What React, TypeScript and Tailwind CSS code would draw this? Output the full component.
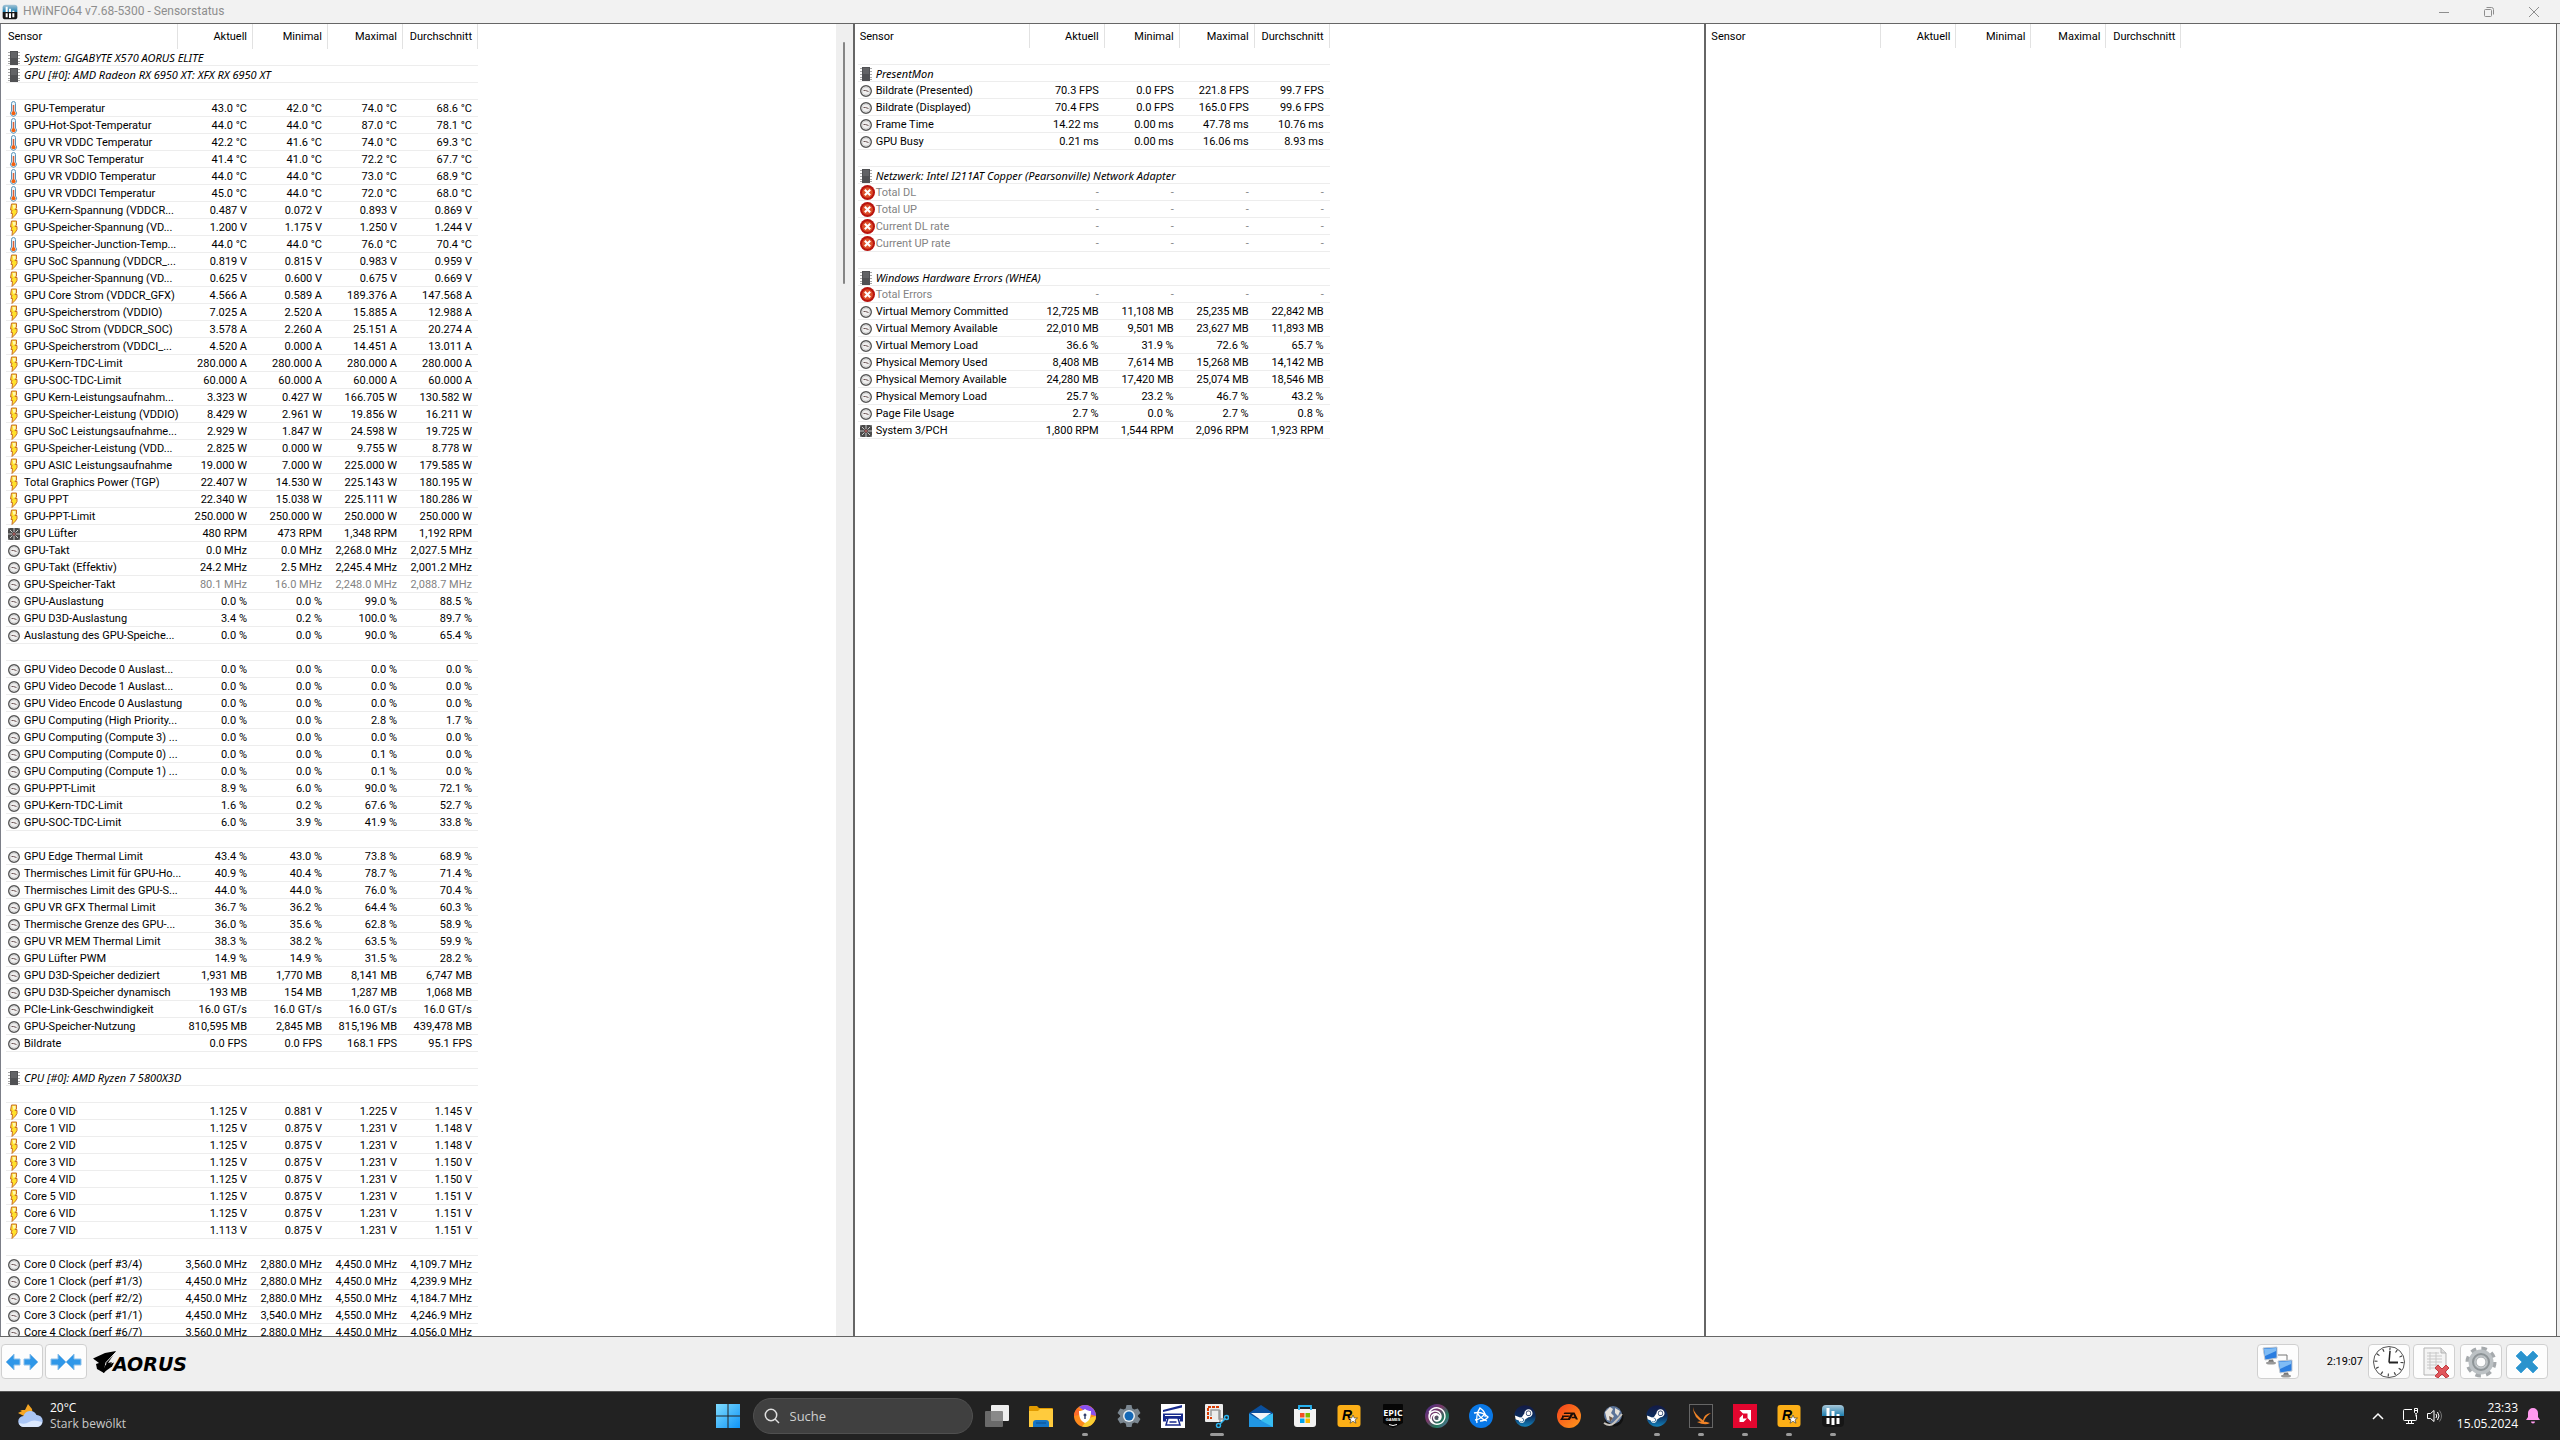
import { FaSteam } from "react-icons/fa"
import { SiEa, SiUbisoft } from "react-icons/si"

type Kind = "chip" | "temp" | "volt" | "fan" | "clock" | "error"

interface IRow {
    kind?: Kind
    name?: string
    values?: string[]
    dim?: boolean
}

const group = (name: string): IRow => ({ kind: "chip", name })
const row = (kind: Kind, name: string, values: string, dim = false): IRow => ({
    kind,
    name,
    values: values.split("|"),
    dim,
})
const gap: IRow = {}

const hardwareRows: IRow[] = [
    group("System: GIGABYTE X570 AORUS ELITE"),
    group("GPU [#0]: AMD Radeon RX 6950 XT: XFX RX 6950 XT"),
    gap,
    row("temp", "GPU-Temperatur", "43.0 °C|42.0 °C|74.0 °C|68.6 °C"),
    row("temp", "GPU-Hot-Spot-Temperatur", "44.0 °C|44.0 °C|87.0 °C|78.1 °C"),
    row("temp", "GPU VR VDDC Temperatur", "42.2 °C|41.6 °C|74.0 °C|69.3 °C"),
    row("temp", "GPU VR SoC Temperatur", "41.4 °C|41.0 °C|72.2 °C|67.7 °C"),
    row("temp", "GPU VR VDDIO Temperatur", "44.0 °C|44.0 °C|73.0 °C|68.9 °C"),
    row("temp", "GPU VR VDDCI Temperatur", "45.0 °C|44.0 °C|72.0 °C|68.0 °C"),
    row("volt", "GPU-Kern-Spannung (VDDCR...", "0.487 V|0.072 V|0.893 V|0.869 V"),
    row("volt", "GPU-Speicher-Spannung (VD...", "1.200 V|1.175 V|1.250 V|1.244 V"),
    row("temp", "GPU-Speicher-Junction-Temp...", "44.0 °C|44.0 °C|76.0 °C|70.4 °C"),
    row("volt", "GPU SoC Spannung (VDDCR_...", "0.819 V|0.815 V|0.983 V|0.959 V"),
    row("volt", "GPU-Speicher-Spannung (VD...", "0.625 V|0.600 V|0.675 V|0.669 V"),
    row("volt", "GPU Core Strom (VDDCR_GFX)", "4.566 A|0.589 A|189.376 A|147.568 A"),
    row("volt", "GPU-Speicherstrom (VDDIO)", "7.025 A|2.520 A|15.885 A|12.988 A"),
    row("volt", "GPU SoC Strom (VDDCR_SOC)", "3.578 A|2.260 A|25.151 A|20.274 A"),
    row("volt", "GPU-Speicherstrom (VDDCI_...", "4.520 A|0.000 A|14.451 A|13.011 A"),
    row("volt", "GPU-Kern-TDC-Limit", "280.000 A|280.000 A|280.000 A|280.000 A"),
    row("volt", "GPU-SOC-TDC-Limit", "60.000 A|60.000 A|60.000 A|60.000 A"),
    row("volt", "GPU Kern-Leistungsaufnahm...", "3.323 W|0.427 W|166.705 W|130.582 W"),
    row("volt", "GPU-Speicher-Leistung (VDDIO)", "8.429 W|2.961 W|19.856 W|16.211 W"),
    row("volt", "GPU SoC Leistungsaufnahme...", "2.929 W|1.847 W|24.598 W|19.725 W"),
    row("volt", "GPU-Speicher-Leistung (VDD...", "2.825 W|0.000 W|9.755 W|8.778 W"),
    row("volt", "GPU ASIC Leistungsaufnahme", "19.000 W|7.000 W|225.000 W|179.585 W"),
    row("volt", "Total Graphics Power (TGP)", "22.407 W|14.530 W|225.143 W|180.195 W"),
    row("volt", "GPU PPT", "22.340 W|15.038 W|225.111 W|180.286 W"),
    row("volt", "GPU-PPT-Limit", "250.000 W|250.000 W|250.000 W|250.000 W"),
    row("fan", "GPU Lüfter", "480 RPM|473 RPM|1,348 RPM|1,192 RPM"),
    row("clock", "GPU-Takt", "0.0 MHz|0.0 MHz|2,268.0 MHz|2,027.5 MHz"),
    row("clock", "GPU-Takt (Effektiv)", "24.2 MHz|2.5 MHz|2,245.4 MHz|2,001.2 MHz"),
    row("clock", "GPU-Speicher-Takt", "80.1 MHz|16.0 MHz|2,248.0 MHz|2,088.7 MHz", true),
    row("clock", "GPU-Auslastung", "0.0 %|0.0 %|99.0 %|88.5 %"),
    row("clock", "GPU D3D-Auslastung", "3.4 %|0.2 %|100.0 %|89.7 %"),
    row("clock", "Auslastung des GPU-Speiche...", "0.0 %|0.0 %|90.0 %|65.4 %"),
    gap,
    row("clock", "GPU Video Decode 0 Auslast...", "0.0 %|0.0 %|0.0 %|0.0 %"),
    row("clock", "GPU Video Decode 1 Auslast...", "0.0 %|0.0 %|0.0 %|0.0 %"),
    row("clock", "GPU Video Encode 0 Auslastung", "0.0 %|0.0 %|0.0 %|0.0 %"),
    row("clock", "GPU Computing (High Priority...", "0.0 %|0.0 %|2.8 %|1.7 %"),
    row("clock", "GPU Computing (Compute 3) ...", "0.0 %|0.0 %|0.0 %|0.0 %"),
    row("clock", "GPU Computing (Compute 0) ...", "0.0 %|0.0 %|0.1 %|0.0 %"),
    row("clock", "GPU Computing (Compute 1) ...", "0.0 %|0.0 %|0.1 %|0.0 %"),
    row("clock", "GPU-PPT-Limit", "8.9 %|6.0 %|90.0 %|72.1 %"),
    row("clock", "GPU-Kern-TDC-Limit", "1.6 %|0.2 %|67.6 %|52.7 %"),
    row("clock", "GPU-SOC-TDC-Limit", "6.0 %|3.9 %|41.9 %|33.8 %"),
    gap,
    row("clock", "GPU Edge Thermal Limit", "43.4 %|43.0 %|73.8 %|68.9 %"),
    row("clock", "Thermisches Limit für GPU-Ho...", "40.9 %|40.4 %|78.7 %|71.4 %"),
    row("clock", "Thermisches Limit des GPU-S...", "44.0 %|44.0 %|76.0 %|70.4 %"),
    row("clock", "GPU VR GFX Thermal Limit", "36.7 %|36.2 %|64.4 %|60.3 %"),
    row("clock", "Thermische Grenze des GPU-...", "36.0 %|35.6 %|62.8 %|58.9 %"),
    row("clock", "GPU VR MEM Thermal Limit", "38.3 %|38.2 %|63.5 %|59.9 %"),
    row("clock", "GPU Lüfter PWM", "14.9 %|14.9 %|31.5 %|28.2 %"),
    row("clock", "GPU D3D-Speicher dediziert", "1,931 MB|1,770 MB|8,141 MB|6,747 MB"),
    row("clock", "GPU D3D-Speicher dynamisch", "193 MB|154 MB|1,287 MB|1,068 MB"),
    row("clock", "PCIe-Link-Geschwindigkeit", "16.0 GT/s|16.0 GT/s|16.0 GT/s|16.0 GT/s"),
    row("clock", "GPU-Speicher-Nutzung", "810,595 MB|2,845 MB|815,196 MB|439,478 MB"),
    row("clock", "Bildrate", "0.0 FPS|0.0 FPS|168.1 FPS|95.1 FPS"),
    gap,
    group("CPU [#0]: AMD Ryzen 7 5800X3D"),
    gap,
    row("volt", "Core 0 VID", "1.125 V|0.881 V|1.225 V|1.145 V"),
    row("volt", "Core 1 VID", "1.125 V|0.875 V|1.231 V|1.148 V"),
    row("volt", "Core 2 VID", "1.125 V|0.875 V|1.231 V|1.148 V"),
    row("volt", "Core 3 VID", "1.125 V|0.875 V|1.231 V|1.150 V"),
    row("volt", "Core 4 VID", "1.125 V|0.875 V|1.231 V|1.150 V"),
    row("volt", "Core 5 VID", "1.125 V|0.875 V|1.231 V|1.151 V"),
    row("volt", "Core 6 VID", "1.125 V|0.875 V|1.231 V|1.151 V"),
    row("volt", "Core 7 VID", "1.113 V|0.875 V|1.231 V|1.151 V"),
    gap,
    row("clock", "Core 0 Clock (perf #3/4)", "3,560.0 MHz|2,880.0 MHz|4,450.0 MHz|4,109.7 MHz"),
    row("clock", "Core 1 Clock (perf #1/3)", "4,450.0 MHz|2,880.0 MHz|4,450.0 MHz|4,239.9 MHz"),
    row("clock", "Core 2 Clock (perf #2/2)", "4,450.0 MHz|2,880.0 MHz|4,550.0 MHz|4,184.7 MHz"),
    row("clock", "Core 3 Clock (perf #1/1)", "4,450.0 MHz|3,540.0 MHz|4,550.0 MHz|4,246.9 MHz"),
    row("clock", "Core 4 Clock (perf #6/7)", "3,560.0 MHz|2,880.0 MHz|4,450.0 MHz|4,056.0 MHz"),
]

const systemRows: IRow[] = [
    gap,
    group("PresentMon"),
    row("clock", "Bildrate (Presented)", "70.3 FPS|0.0 FPS|221.8 FPS|99.7 FPS"),
    row("clock", "Bildrate (Displayed)", "70.4 FPS|0.0 FPS|165.0 FPS|99.6 FPS"),
    row("clock", "Frame Time", "14.22 ms|0.00 ms|47.78 ms|10.76 ms"),
    row("clock", "GPU Busy", "0.21 ms|0.00 ms|16.06 ms|8.93 ms"),
    gap,
    group("Netzwerk: Intel I211AT Copper (Pearsonville) Network Adapter"),
    row("error", "Total DL", "-|-|-|-", true),
    row("error", "Total UP", "-|-|-|-", true),
    row("error", "Current DL rate", "-|-|-|-", true),
    row("error", "Current UP rate", "-|-|-|-", true),
    gap,
    group("Windows Hardware Errors (WHEA)"),
    row("error", "Total Errors", "-|-|-|-", true),
    row("clock", "Virtual Memory Committed", "12,725 MB|11,108 MB|25,235 MB|22,842 MB"),
    row("clock", "Virtual Memory Available", "22,010 MB|9,501 MB|23,627 MB|11,893 MB"),
    row("clock", "Virtual Memory Load", "36.6 %|31.9 %|72.6 %|65.7 %"),
    row("clock", "Physical Memory Used", "8,408 MB|7,614 MB|15,268 MB|14,142 MB"),
    row("clock", "Physical Memory Available", "24,280 MB|17,420 MB|25,074 MB|18,546 MB"),
    row("clock", "Physical Memory Load", "25.7 %|23.2 %|46.7 %|43.2 %"),
    row("clock", "Page File Usage", "2.7 %|0.0 %|2.7 %|0.8 %"),
    row("fan", "System 3/PCH", "1,800 RPM|1,544 RPM|2,096 RPM|1,923 RPM"),
]

const columns = ["Aktuell", "Minimal", "Maximal", "Durchschnitt"]

const SensorIcon = ({ kind }: { kind: Kind }) => {
    if (kind === "chip") {
        return (
            <svg width="12" height="14" viewBox="0 0 12 14" className="shrink-0">
                <path d="M0 1.5h12M0 4.5h12M0 7.5h12M0 10.5h12M0 12.5h12" stroke="#a9a9a9" />
                <rect x="2" width="8" height="14" fill="#505154" />
                <rect x="3" y="1" width="6" height="6" fill="#626366" />
            </svg>
        )
    }
    if (kind === "temp") {
        return (
            <svg width="12" height="16" viewBox="0 0 12 16" className="shrink-0">
                <path d="M3.500 2.500a2 2 0 0 1 4 0v7.500a3 3 0 1 1-4 0z" fill="#eaf5fc" stroke="#5b93b8" />
                <path d="M5.500 4v8" stroke="#d9623a" strokeWidth="1.500" />
                <circle cx="5.500" cy="12.300" r="2" fill="#f2600f" />
            </svg>
        )
    }
    if (kind === "volt") {
        return (
            <svg width="12" height="16" viewBox="0 0 12 16" className="shrink-0">
                <path d="M3.500 1h5v4L7 6.500h2v3L7.500 12 4 15.500l.5-5H3l1-3.500H2.500z" fill="#ffe12b" stroke="#c8702c" />
                <path d="M4.500 2h3v3L5.500 6z" fill="#fff6b5" />
            </svg>
        )
    }
    if (kind === "fan") {
        return (
            <svg width="12" height="12" viewBox="0 0 12 12" className="shrink-0">
                <rect width="12" height="12" fill="#4b4b4b" />
                <path d="M6 0v4M6 8v4M0 6h4M8 6h4M2 2l2.500 2.500M10 2 7.500 4.500M2 10l2.500-2.500M10 10 7.500 7.500" stroke="#c9c9c9" />
                <circle cx="6" cy="6" r="1.500" fill="#a05a5a" />
                <path d="M0 0h2L0 2zM12 0v2l-2-2zM0 12v-2l2 2zM12 12h-2l2-2z" fill="#8d8d8d" />
            </svg>
        )
    }
    if (kind === "error") {
        return (
            <svg width="15" height="15" viewBox="0 0 14 14" className="shrink-0">
                <circle cx="7" cy="7" r="7" fill="#b8140e" />
                <circle cx="7" cy="7" r="5" fill="#dd4f2a" />
                <path d="m4.500 4.500 5 5m0-5-5 5" stroke="#fff" strokeWidth="2" />
            </svg>
        )
    }
    return (
        <svg width="12" height="14" viewBox="0 0 12 14" className="shrink-0">
            <circle cx="6" cy="7" r="5.300" fill="#efefef" stroke="#555" strokeWidth="1.400" />
            <circle cx="6" cy="7" r="4" fill="none" stroke="#d2d2d2" />
            <path d="M3.500 6.500h2l3 1" stroke="#6d5555" fill="none" />
        </svg>
    )
}

const SensorRow = ({ item }: { item: IRow }) => {
    const line = "h-[17px] border-b border-[#ededed] p-0 pt-px"
    if (!item.kind) {
        return (
            <tr>
                <td colSpan={5} className={line}></td>
            </tr>
        )
    }
    const grayName = item.kind === "error" ? "text-[#838383]" : ""
    const grayValue = item.dim ? "text-[#838383]" : ""
    const name = (
        <div className="flex h-[15px] items-center pl-0.5">
            <span className="flex w-4 shrink-0 items-center">
                <SensorIcon kind={item.kind} />
            </span>
            <span className={grayName}>{item.name}</span>
        </div>
    )
    if (!item.values) {
        return (
            <tr>
                <th colSpan={5} scope="colgroup" className={line + " text-left font-['Noto_Sans',sans-serif] font-normal italic"}>
                    {name}
                </th>
            </tr>
        )
    }
    return (
        <tr>
            <th scope="row" className={line + " text-left font-normal"}>
                {name}
            </th>
            {item.values.map((value, index) => (
                <td key={index} className={line + " pr-1.5 text-right " + grayValue}>
                    {value}
                </td>
            ))}
        </tr>
    )
}

const SensorTable = ({ rows, tall }: { rows: IRow[]; tall?: boolean }) => (
    <table className="w-[472px] shrink-0 table-fixed border-separate border-spacing-0 self-start whitespace-nowrap">
        <colgroup>
            <col className="w-[172px]" />
            <col />
            <col />
            <col />
            <col />
        </colgroup>
        <thead>
            <tr className={tall ? "h-[25px]" : "h-6"}>
                <th scope="col" className="border-r border-[#e2e2e2] p-0 pl-0.5 text-left font-normal">
                    Sensor
                </th>
                {columns.map((column) => (
                    <th key={column} scope="col" className="border-r border-[#e2e2e2] p-0 pr-[5px] text-right font-normal">
                        {column}
                    </th>
                ))}
            </tr>
        </thead>
        <tbody>
            {rows.map((item, index) => (
                <SensorRow key={index} item={item} />
            ))}
        </tbody>
    </table>
)

const HwinfoIcon = ({ size }: { size: number }) => (
    <svg width={size} height={size} viewBox="0 0 24 24">
        <defs>
            <linearGradient id="hw" x2="0" y2="1">
                <stop offset="0" stopColor="#a8c7d8" />
                <stop offset=".5" stopColor="#1d7fb0" />
                <stop offset=".5" stopColor="#161616" />
            </linearGradient>
        </defs>
        <rect x="1" y="1" width="22" height="22" rx="4" fill="url(#hw)" />
        <path d="M7 4v8M12 7v5M17 10v2M7 14v6M12 14v7M17 14v6" stroke="#fff" strokeWidth="3" />
    </svg>
)

const TitleBar = () => (
    <header className="flex h-[23px] shrink-0 items-center bg-[#f2f2f2] pr-5 pl-0.5 text-[#8e8e8e]">
        <HwinfoIcon size={16} />
        <h1 className="ml-[5px] flex-1 text-[12px]">HWiNFO64 v7.68-5300 - Sensorstatus</h1>
        <div className="flex gap-[33px]">
            <button aria-label="Minimieren">
                <svg width="12" height="12" viewBox="0 0 12 12" fill="none" stroke="currentColor">
                    <path d="M1 6.500h10" />
                </svg>
            </button>
            <button aria-label="Wiederherstellen">
                <svg width="12" height="12" viewBox="0 0 12 12" fill="none" stroke="currentColor">
                    <rect x="1.500" y="3.500" width="7" height="7" rx="1" />
                    <path d="M3.500 1.500h5a2 2 0 0 1 2 2v5" />
                </svg>
            </button>
            <button aria-label="Schließen">
                <svg width="12" height="12" viewBox="0 0 12 12" fill="none" stroke="currentColor">
                    <path d="m1 1 10 10M11 1 1 11" />
                </svg>
            </button>
        </div>
    </header>
)

const ToolButton = ({ label, children }: { label: string; children: React.ReactNode }) => (
    <button
        aria-label={label}
        className="flex h-[35px] w-[42px] items-center justify-center rounded border border-[#d0d0d0] bg-[#fdfdfd]"
    >
        {children}
    </button>
)

const AorusLogo = () => (
    <svg width="98" height="24" viewBox="0 0 98 24" role="img" aria-label="AORUS">
        <path d="M0 8.500 12 3l11-2-8 12 4-1-8 11-7-4-1-5 3-1z" />
        <path d="m22 3-9 9.500-1 5" stroke="#efefef" fill="none" />
        <path d="M12 15.500l9-3-2 4-9 6.500z" />
        <text x="20" y="21" fontSize="19" fontWeight="700" fontStyle="italic" fontFamily="DejaVu Sans, sans-serif">
            AORUS
        </text>
    </svg>
)

const Monitor = ({ x, y }: { x: number; y: number }) => (
    <g transform={`translate(${x} ${y})`}>
        <path d="M0 1 14 0v11L2 13z" fill="#2a7de0" stroke="#c3cad2" />
        <path d="M1 2 13 1v3L2 9z" fill="#7fbcf5" />
        <path d="m6 13 4-.5 1 3H5z" fill="#777" />
        <ellipse cx="8" cy="16" rx="5" ry="1.500" fill="#999" />
    </g>
)

const ToolBar = () => (
    <div className="flex h-[54px] shrink-0 items-start bg-[#efefef] pt-[7px] pr-3 pl-px">
        <div className="flex gap-0.5">
            <ToolButton label="Spalten verbreitern">
                <svg width="34" height="20" viewBox="0 0 34 20" fill="#2f97e8" stroke="#8cc0ea">
                    <path d="M1 10 9 2v5h6v6H9v5zM33 10l-8-8v5h-6v6h6v5z" />
                </svg>
            </ToolButton>
            <ToolButton label="Spalten verkleinern">
                <svg width="34" height="20" viewBox="0 0 34 20" fill="#2f97e8" stroke="#8cc0ea">
                    <path d="M17 10 9 2v5H2v6h7v5zM17 10l8-8v5h7v6h-7v5z" />
                </svg>
            </ToolButton>
        </div>
        <div className="ml-1.5 flex h-[35px] flex-1 items-center">
            <AorusLogo />
        </div>
        <div className="flex items-center">
            <ToolButton label="Netzwerk">
                <svg width="32" height="32" viewBox="0 0 32 32">
                    <path d="M16 9h9v7" fill="none" stroke="#777" />
                    <Monitor x={1} y={1} />
                    <Monitor x={16} y={14} />
                </svg>
            </ToolButton>
            <time className="w-[69px] pr-[5px] text-right">2:19:07</time>
            <ToolButton label="Uhr">
                <svg width="34" height="34" viewBox="0 0 34 34" fill="none" stroke="#222">
                    <circle cx="17" cy="17" r="15.500" stroke="#555" fill="#fff" />
                    <circle cx="17" cy="17" r="13" strokeWidth="3" strokeDasharray="1.200 5.607" stroke="#444" />
                    <path d="M17 17.500 18 6" strokeWidth="1.500" />
                    <path d="M17 17.500h9" strokeWidth="2" />
                </svg>
            </ToolButton>
            <div className="w-[3px]" />
            <ToolButton label="Protokoll">
                <svg width="34" height="32" viewBox="0 0 34 32">
                    <path d="M7 2h17l5 5v22H7z" fill="#f4f4f4" stroke="#b3b3b3" />
                    <path d="M24 2v5h5" fill="#ddd" stroke="#b3b3b3" />
                    <path d="M10 7h12M10 10h15M10 13h15M10 16h15M10 19h12M10 22h10M13 6v18M19 6v18" stroke="#c8c8c8" />
                    <path d="m21 19 4 4 4-4 3 3-4 4 4 4-3 2-4-4-4 4-3-2 4-4-4-4z" fill="#e0575c" stroke="#c23a40" />
                </svg>
            </ToolButton>
            <div className="w-[5px]" />
            <ToolButton label="Einstellungen">
                <svg width="32" height="32" viewBox="0 0 32 32">
                    <circle cx="16" cy="16" r="13" fill="none" stroke="#a5a9ac" strokeWidth="5" strokeDasharray="5.200 5.010" />
                    <circle cx="16" cy="16" r="9" fill="none" stroke="#bcc1c4" strokeWidth="7" />
                    <circle cx="16" cy="16" r="8" fill="none" stroke="#8e9497" strokeWidth="2" />
                    <circle cx="16" cy="16" r="5" fill="#fdfdfd" stroke="#9aa0a3" />
                </svg>
            </ToolButton>
            <div className="w-1" />
            <ToolButton label="Beenden">
                <svg width="24" height="24" viewBox="0 0 24 24">
                    <path d="m6 1 6 6 6-6 5 5-6 6 6 6-5 5-6-6-6 6-5-5 6-6-6-6z" fill="#2b93cd" stroke="#4aa9dd" />
                </svg>
            </ToolButton>
        </div>
    </div>
)

const Steam = () => (
    <svg width="24" height="24" viewBox="0 0 24 24">
        <defs>
            <linearGradient id="steam" x2="0" y2="1">
                <stop offset="0" stopColor="#141a45" />
                <stop offset=".5" stopColor="#0c2c5c" />
                <stop offset="1" stopColor="#1383bd" />
            </linearGradient>
        </defs>
        <circle cx="12" cy="12" r="10" fill="#fff" />
        <FaSteam x="1" y="1" size={22} fill="url(#steam)" />
    </svg>
)

const Rockstar = () => (
    <svg width="24" height="24" viewBox="0 0 24 24">
        <rect x=".5" y="1" width="23" height="22" rx="3" fill="#fcaf17" />
        <text x="5" y="16" fontSize="14" fontWeight="700" fontStyle="italic" fontFamily="Liberation Sans, sans-serif">
            R
        </text>
        <path d="m16 11 1.300 3H20.500l-2.500 2 1 3.200-3-1.900-3 1.900 1-3.200-2.500-2h3.200z" fill="#fff" stroke="#333" strokeWidth=".6" />
    </svg>
)

// pinned and running programs, in taskbar order
const apps: { name: string; icon: React.ReactNode; state?: "open" | "active" }[] = [
    {
        name: "Aktive Anwendungen",
        icon: (
            <svg width="24" height="24" viewBox="0 0 24 24">
                <rect x="6" y="1" width="18" height="16" rx="1" fill="#eee" />
                <rect y="7" width="18" height="16" rx="1" fill="#777" fillOpacity=".85" />
            </svg>
        ),
    },
    {
        name: "Explorer",
        icon: (
            <svg width="24" height="24" viewBox="0 0 24 24">
                <path d="M0 3a1 1 0 0 1 1-1h7l2 2h13a1 1 0 0 1 1 1v4H0z" fill="#e19a00" />
                <path d="M0 7h9l2-2h12a1 1 0 0 1 1 1v17H0z" fill="#ffcb3d" />
                <path d="M4 23v-4a3 3 0 0 1 3-3h10a3 3 0 0 1 3 3v4z" fill="#1574c4" />
                <path d="M7 19h10" stroke="#0d4f8e" />
            </svg>
        ),
    },
    {
        name: "Browser",
        state: "open",
        icon: (
            <svg width="24" height="24" viewBox="0 0 24 24">
                <circle cx="12" cy="12" r="11" fill="#ff8a1c" />
                <path d="M6 3a11 11 0 0 1 17 9l-7-2z" fill="#8950f0" />
                <path d="M23 12a11 11 0 0 1-14 10.500L16 14z" fill="#f9cf33" />
                <path d="M1 12A11 11 0 0 1 5 4l4 6z" fill="#ff6a2c" />
                <path d="M12 5c2 1.500 4 2 6 2 0 5-1 10-6 12-5-2-6-7-6-12 2 0 4-.5 6-2z" fill="#fff" />
                <path d="M12 9.500a1.500 1.500 0 0 1 .7 2.800V15h-1.400v-2.700a1.500 1.500 0 0 1 .7-2.800z" fill="#34406e" />
            </svg>
        ),
    },
    {
        name: "Einstellungen",
        icon: (
            <svg width="24" height="24" viewBox="0 0 24 24">
                <path
                    d="M9.500 1h5l.8 3.400 2 1.200 3.500-1.100L23.500 9l-2.600 2.400v1.200l2.600 2.400-2.700 4.500-3.500-1.100-2 1.200-.8 3.400h-5l-.8-3.400-2-1.200-3.500 1.100L.5 15l2.600-2.400v-1.200L.5 9l2.700-4.500 3.500 1.100 2-1.200z"
                    fill="#7b8791"
                />
                <circle cx="12" cy="12" r="6" fill="#e6edf2" />
                <circle cx="12" cy="12" r="4.500" fill="#1467b5" />
            </svg>
        ),
    },
    {
        name: "Scanner",
        icon: (
            <svg width="24" height="24" viewBox="0 0 24 24">
                <rect width="24" height="24" fill="#fff" />
                <path d="m2 6 19-5v2.500L2 8zM2 9.500h20v8h-3V15H5v2.500H2z" fill="#172a8c" />
                <path d="M4 11.500h16" stroke="#fff" />
                <path d="M7 14h10l2 7H5z" fill="#fff" stroke="#172a8c" strokeWidth="1.500" />
                <path d="M8.500 18h7" stroke="#172a8c" strokeWidth="1.500" />
            </svg>
        ),
    },
    {
        name: "Snipping Tool",
        state: "active",
        icon: (
            <svg width="24" height="24" viewBox="0 0 24 24">
                <rect width="18" height="18" rx="1" fill="#ececec" />
                <path d="M14 3H3v11h4" fill="none" stroke="#d83b01" strokeWidth="2" strokeDasharray="3 1" />
                <path d="M6 12V6h8v9h7M15 6v12" fill="none" stroke="#999" strokeWidth="1.500" />
                <circle cx="21.500" cy="13.500" r="2" fill="none" stroke="#2bb3ee" strokeWidth="1.500" />
                <circle cx="13.500" cy="21.500" r="2" fill="none" stroke="#2bb3ee" strokeWidth="1.500" />
                <path d="m20 15-5 5" stroke="#2bb3ee" strokeWidth="1.500" />
            </svg>
        ),
    },
    {
        name: "Mail",
        icon: (
            <svg width="24" height="24" viewBox="0 0 24 24">
                <path d="M0 9 12 1l12 8v14H0z" fill="#0a4f9c" />
                <path d="M0 9.500 12 17l12-7.500V23H0z" fill="#2196e3" />
                <path d="M24 9.500V23L9 15z" fill="#38bdf2" />
                <path d="M2 9h20l-10 7z" fill="#f3f6f9" />
            </svg>
        ),
    },
    {
        name: "Microsoft Store",
        icon: (
            <svg width="24" height="24" viewBox="0 0 24 24">
                <path d="M6 7V2h12v5" fill="none" stroke="#28b1ee" strokeWidth="1.800" />
                <path d="M1 5h22v15a3 3 0 0 1-3 3H4a3 3 0 0 1-3-3z" fill="#f2f2f2" />
                <path d="M6 3v3M18 3v3" stroke="#28b1ee" strokeWidth="1.800" />
                <path d="M7 9h4.500v4.500H7z" fill="#f25022" />
                <path d="M12.500 9H17v4.500h-4.500z" fill="#7fba00" />
                <path d="M7 14.500h4.500V19H7z" fill="#00a4ef" />
                <path d="M12.500 14.500H17V19h-4.500z" fill="#ffb900" />
            </svg>
        ),
    },
    { name: "Rockstar Games", icon: <Rockstar /> },
    {
        name: "Epic Games",
        icon: (
            <svg width="24" height="24" viewBox="0 0 24 24">
                <path d="M2 1a1 1 0 0 1 1-1h18a1 1 0 0 1 1 1v18l-10 5-10-5z" fill="#060606" />
                <text x="12" y="12" fontSize="9" fontWeight="700" textAnchor="middle" fill="#fff" fontFamily="Open Sans, sans-serif">
                    EPIC
                </text>
                <text x="12" y="17" fontSize="4" fontWeight="700" textAnchor="middle" fill="#fff" fontFamily="Liberation Sans, sans-serif">
                    GAMES
                </text>
                <path d="M8 20.500q4 2 8 0" stroke="#fff" fill="none" />
            </svg>
        ),
    },
    {
        name: "Ubisoft Connect",
        icon: (
            <svg width="24" height="24" viewBox="0 0 24 24">
                <defs>
                    <linearGradient id="ubi" x2="1" y2="1">
                        <stop offset="0" stopColor="#3c2a86" />
                        <stop offset=".4" stopColor="#7a3a6a" />
                        <stop offset=".7" stopColor="#1f7a5c" />
                        <stop offset="1" stopColor="#7a6ab8" />
                    </linearGradient>
                </defs>
                <circle cx="12" cy="12" r="12" fill="url(#ubi)" />
                <SiUbisoft x="3" y="3" size={18} color="#fff" />
            </svg>
        ),
    },
    {
        name: "Battle.net",
        icon: (
            <svg width="24" height="24" viewBox="0 0 24 24">
                <circle cx="12" cy="12" r="12" fill="#0a78e6" />
                <g fill="none" stroke="#fff" strokeWidth="1.300">
                    <path d="M8 19C7 15 8 8 11 4q6 4 5 9" />
                    <path d="M5 9q8-2 14 4-3 4-8 4" />
                    <path d="M8 8q3 7 10 9M16 9q-3 6-10 7" />
                </g>
            </svg>
        ),
    },
    { name: "Steam", icon: <Steam /> },
    {
        name: "EA",
        icon: (
            <svg width="24" height="24" viewBox="0 0 24 24">
                <defs>
                    <linearGradient id="ea" x2="1" y2="1">
                        <stop offset="0" stopColor="#f4401c" />
                        <stop offset="1" stopColor="#ff9a1c" />
                    </linearGradient>
                </defs>
                <circle cx="12" cy="12" r="12" fill="url(#ea)" />
                <path
                    d="M7.500 8.500h7L13.500 10h-7zM5 11.500h7.500l-1 1.500H7l-1 1.500h5L14.500 8.500h3l3.500 7h-2.200l-.6-1.200h-4l1-1.600h2.200l-1.200-2.400-3.400 5.700H3l2-3z"
                    fill="#1a0d08"
                />
            </svg>
        ),
    },
    {
        name: "Globus",
        icon: (
            <svg width="24" height="24" viewBox="0 0 24 24">
                <circle cx="13" cy="13" r="9.500" fill="#111" />
                <circle cx="12" cy="11" r="9" fill="#5b7398" />
                <path d="M4 8 9 3l3 2-2 4 3 3-3 5-4-1zM14 4l5 3-2 5-3-3z" fill="#e4e0da" />
                <path d="M8 12l4 2-3 4z" fill="#6b5648" />
                <path d="M3 19q6 4 10 0t8-9" stroke="#c9c4bd" strokeWidth="2" fill="none" />
            </svg>
        ),
    },
    { name: "Steam Fenster", icon: <Steam />, state: "open" },
    {
        name: "Spiel",
        state: "open",
        icon: (
            <svg width="24" height="24" viewBox="0 0 24 24">
                <rect x=".5" y=".5" width="23" height="23" fill="#1f1f21" stroke="#666" />
                <path d="M4 3q1 7 11 14v2Q4 14 4 3zM22 9q-7 1-8 7l1 1q2-5 7-8zM8 18q6-2 13 1-5 3-13-1z" fill="#f08327" />
            </svg>
        ),
    },
    {
        name: "AMD Software",
        state: "open",
        icon: (
            <svg width="24" height="24" viewBox="0 0 24 24">
                <rect width="24" height="24" fill="#e3062f" />
                <path d="M6.500 6H18v11.500l-3.500-3.500V9.500H10z" fill="#fff" />
                <path d="M10 10.500v4h4L10.500 18H6.500v-4z" fill="#fff" />
            </svg>
        ),
    },
    { name: "Rockstar Games Fenster", icon: <Rockstar />, state: "open" },
    { name: "HWiNFO64", icon: <HwinfoIcon size={24} />, state: "open" },
]

const Marker = ({ state }: { state?: "open" | "active" }) => {
    if (!state) return null
    return (
        <span
            className={
                "absolute bottom-0 left-1/2 h-[3px] -translate-x-1/2 rounded-full bg-[#9b9b9b] " +
                (state === "active" ? "w-3.5" : "w-1.5")
            }
        />
    )
}

const TaskBar = () => (
    <footer className="grid h-[49px] shrink-0 grid-cols-[1fr_auto_1fr] items-center border-t border-[#555] bg-[#222] font-['Open_Sans',sans-serif] text-[12px] leading-4 text-white">
        <button className="flex items-center gap-1.5 pl-[18px] text-left">
            <svg width="26" height="26" viewBox="0 0 26 26">
                <path d="m10 1 4 5 1 7H6L0 10l4-2-2-1h5z" fill="#f6a623" />
                <path d="M6 24a5.500 5.500 0 0 1-.5-11 7 7 0 0 1 13-1A6 6 0 1 1 19 24z" fill="#a9c5f5" />
                <path d="M6 24a5 5 0 0 1-5-4q6 2 10-1t13 0a5 5 0 0 1-5 5z" fill="#dbe8fd" />
            </svg>
            <span>
                <span className="block">20°C</span>
                <span className="block text-[#c9c9c9]">Stark bewölkt</span>
            </span>
        </button>
        <div className="flex items-center">
            <button aria-label="Start" className="flex w-11 justify-center">
                <svg width="24" height="24" viewBox="0 0 24 24">
                    <defs>
                        <linearGradient id="win" x2="1" y2="1">
                            <stop offset="0" stopColor="#7fdcff" />
                            <stop offset="1" stopColor="#0f93f5" />
                        </linearGradient>
                    </defs>
                    <path d="M0 0h11.500v11.500H0zM12.500 0H24v11.500H12.500zM0 12.500h11.500V24H0zM12.500 12.500H24V24H12.500z" fill="url(#win)" />
                </svg>
            </button>
            <label className="mr-0.5 ml-[3px] flex h-9 w-[220px] items-center gap-2.5 rounded-full border border-[#505050] bg-[#404040] pl-2.5">
                <svg width="16" height="16" viewBox="0 0 16 16" fill="none" stroke="#e0e0e0" strokeWidth="1.500">
                    <circle cx="7" cy="7" r="5.700" />
                    <path d="m11 11 4 4" />
                </svg>
                <input
                    type="search"
                    aria-label="Suche"
                    placeholder="Suche"
                    className="w-40 bg-transparent text-[13px] outline-none placeholder:text-[#cfcfcf]"
                />
            </label>
            {apps.map((app) => (
                <button key={app.name} aria-label={app.name} className="relative flex h-10 w-11 items-center justify-center">
                    {app.icon}
                    <Marker state={app.state} />
                </button>
            ))}
        </div>
        <div className="flex items-center justify-end pr-5">
            <button aria-label="Ausgeblendete Symbole" className="mr-[18px]">
                <svg width="12" height="8" viewBox="0 0 12 8" fill="none" stroke="#fff" strokeWidth="1.500">
                    <path d="m1 7 5-5 5 5" />
                </svg>
            </button>
            <button aria-label="Netzwerk und Ton" className="mr-3.5 flex items-center gap-[7px]">
                <svg width="17" height="18" viewBox="0 0 17 18" fill="none" stroke="#fff">
                    <path d="M10 2.500H2.500a1 1 0 0 0-1 1v9a1 1 0 0 0 1 1h11a1 1 0 0 0 1-1V8M6.500 13.500v3M9.500 13.500v3M4 16.500h8" />
                    <path d="M12.500 1.500h3v4l-1 1h-1l-1-1zM12.500 3.500h3M14 6.500v3" />
                </svg>
                <svg width="17" height="16" viewBox="0 0 17 16" fill="none" stroke="#fff">
                    <path d="M1.500 5.500h3L8 2.500v11l-3.500-3h-3z" />
                    <path d="M10 6q1.500 2 0 4M11.500 4q3 4 0 8" />
                    <path d="M13.500 2.500q4 5.500 0 11" stroke="#777" />
                </svg>
            </button>
            <time className="text-right">
                <span className="block">23:33</span>
                <span className="block">15.05.2024</span>
            </time>
            <button aria-label="Benachrichtigungen" className="ml-2">
                <svg width="14" height="16" viewBox="0 0 14 16" fill="#ff99ee">
                    <path d="M7 0a5 5 0 0 1 5 5v4l2 3H0l2-3V5a5 5 0 0 1 5-5zM5 13.500h4a2 2 0 0 1-4 0z" />
                </svg>
            </button>
        </div>
    </footer>
)

const App = () => {
    return (
        <div className="flex h-screen flex-col overflow-hidden bg-[#efefef] font-[Roboto,sans-serif] text-[11px] leading-[15px] text-black">
            <TitleBar />
            <main className="flex min-h-0 flex-1 border-y border-[#666] pr-[3px]">
                <section className="flex min-w-0 flex-1 overflow-hidden border-l border-[#7c7f88] bg-white pl-[5px]">
                    <SensorTable rows={hardwareRows} tall />
                    <div className="ml-auto w-[17px] bg-[#efefef] pt-[18px]">
                        <div className="mx-auto h-[242px] w-0.5 rounded bg-[#858585]" />
                    </div>
                </section>
                <section className="flex min-w-0 flex-1 border-l-2 border-[#666] bg-white pl-[3px]">
                    <SensorTable rows={systemRows} />
                </section>
                <section className="flex min-w-0 flex-1 border-r border-l-2 border-[#666] bg-white pl-[3px]">
                    <SensorTable rows={[]} />
                </section>
            </main>
            <ToolBar />
            <TaskBar />
        </div>
    )
}

export default App
